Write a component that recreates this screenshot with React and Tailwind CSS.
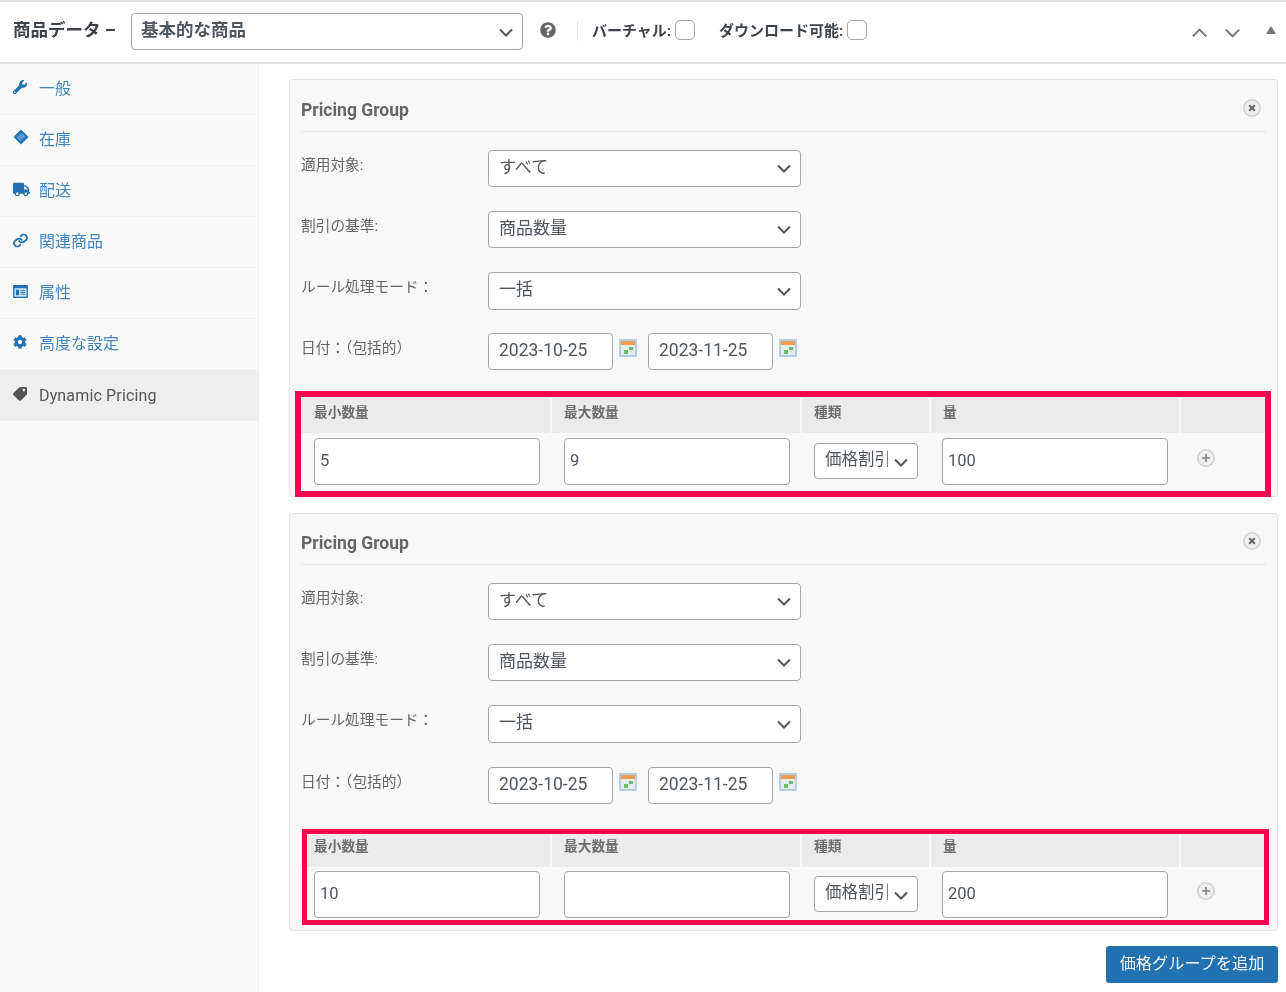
import React from "react";
import { FaWrench, FaTruck, FaCog, FaTag, FaQuestionCircle } from "react-icons/fa";
import { Link } from "lucide-react";

const FONT = "[font-family:Roboto,'Noto_Sans_CJK_JP',sans-serif]";

function Chevron({ className, color = "#50575e", width = 2 }) {
  return (
    <svg viewBox="0 0 14 9" className={className} fill="none" stroke={color} strokeWidth={width}>
      <path d="M1 1.5 L7 7.5 L13 1.5" />
    </svg>
  );
}

function Select({ value, wrap, select, chev }) {
  return (
    <div className={`relative ${wrap}`}>
      <select
        defaultValue={value}
        className={`block w-full h-full appearance-none bg-white border border-[#a3a6aa] rounded-[4px] text-[#50575e] pb-[2px] ${select}`}
      >
        <option>{value}</option>
      </select>
      <Chevron className={`absolute pointer-events-none w-[14px] h-[9px] ${chev}`} />
    </div>
  );
}

function CalendarIcon() {
  return (
    <svg viewBox="0 0 18 18" className="w-[18px] h-[18px] mb-[13px] ml-[6px] shrink-0">
      <rect x="0" y="0" width="18" height="18" rx="1" fill="#b4cfea" />
      <rect x="2" y="2" width="14" height="14" fill="#e4ecef" />
      <rect x="2" y="2" width="14" height="4" fill="#f59a4c" />
      <rect x="5" y="11" width="4" height="4" fill="#6fbf62" />
      <rect x="10" y="8" width="4" height="3" fill="#6fbf62" />
    </svg>
  );
}

function DateInput({ value }) {
  return (
    <input
      defaultValue={value}
      className="w-[125px] h-[37px] bg-white border border-[#a3a6aa] rounded-[4px] px-[10px] pb-[3px] text-[17.5px] text-[#50575e] outline-none"
    />
  );
}

function Label({ children }) {
  return <div className="w-[187px] shrink-0 text-[14.7px] leading-[20px] text-[#666] pt-[5px]">{children}</div>;
}

function RoundIcon({ kind }) {
  return (
    <svg viewBox="0 0 18 18" className="w-[18px] h-[18px]">
      <circle cx="9" cy="9" r="9" fill="#d2d2d2" />
      <circle cx="9" cy="9" r="7.4" fill="#efefef" />
      {kind === "plus" ? (
        <path d="M9 5V13M5 9H13" stroke="#808080" strokeWidth="1.6" />
      ) : (
        <path d="M6.2 6.2L11.8 11.8M11.8 6.2L6.2 11.8" stroke="#666" strokeWidth="2" />
      )}
    </svg>
  );
}

function NumInput({ value }) {
  return (
    <input
      defaultValue={value}
      className="block w-[226px] h-[47px] bg-white border border-[#a3a6aa] rounded-[4px] px-[5px] pb-[3px] text-[16.5px] text-[#50575e] outline-none"
    />
  );
}

function Head({ children, pad = "pl-[13px]", cls }) {
  return <div className={`bg-[#ebebeb] flex items-center ${pad} ${cls} text-[13.7px] font-bold text-[#6e6e6e]`}>{children}</div>;
}

function Panel({ min, max, amount, v }) {
  return (
    <section className={`bg-[#f8f8f8] border border-[#e5e5e5] rounded-[3px] px-[11px] ${v.panel}`}>
      <h3 className={`flex items-center justify-between border-b border-[#e6e6e6] text-[17.5px] font-bold text-[#666] pr-[5px] ${v.title}`}>
        <span>Pricing Group</span>
        <span className="mb-[5px]"><RoundIcon kind="x" /></span>
      </h3>
      <div className="flex mt-[18px] mb-[24px] h-[37px]">
        <Label>適用対象:</Label>
        <Select value="すべて" wrap="w-[313px] h-[37px]" select="px-[10px] text-[17px]" chev="right-[10px] top-[14px]" />
      </div>
      <div className="flex mb-[24px] h-[37px]">
        <Label>割引の基準:</Label>
        <Select value="商品数量" wrap="w-[313px] h-[37px]" select="px-[10px] text-[17px]" chev="right-[10px] top-[14px]" />
      </div>
      <div className={`flex h-[37px] ${v.row3}`}>
        <Label>ルール処理モード：</Label>
        <Select value="一括" wrap="w-[313px] h-[38px]" select="px-[10px] text-[17px]" chev="right-[10px] top-[15px]" />
      </div>
      <div className={`flex items-end h-[37px] ${v.row4}`}>
        <div className="w-[187px] shrink-0 self-start text-[14.7px] leading-[20px] text-[#666] pt-[5px]">日付：（包括的）</div>
        <DateInput value="2023-10-25" />
        <CalendarIcon />
        <div className="w-[11px] shrink-0" />
        <DateInput value="2023-11-25" />
        <CalendarIcon />
      </div>
      <div className="relative">
        <div className="grid grid-cols-[249px_248px_127px_248px_85px] gap-x-[2px]">
          <Head cls={v.headText}>最小数量</Head>
          <Head pad="pl-[12px]" cls={v.headText}>最大数量</Head>
          <Head pad="pl-[12px]" cls={v.headText}>種類</Head>
          <Head pad="pl-[12px]" cls={v.headText}>量</Head>
          <div className={`bg-[#ebebeb] ${v.head}`} />
          <div className={`pl-[13px] ${v.cell}`}><NumInput value={min} /></div>
          <div className={`pl-[12px] ${v.cell}`}><NumInput value={max} /></div>
          <div className={`pl-[12px] ${v.cellSelect}`}>
            <Select value="価格割引" wrap="w-[104px] h-[36px]" select="pl-[10px] pr-[29px] text-[16.5px] overflow-hidden" chev="right-[10px] top-[15px]" />
          </div>
          <div className={`pl-[11px] ${v.cell}`}><NumInput value={amount} /></div>
          <div className={`pl-[16px] ${v.cellPlus}`}><RoundIcon kind="plus" /></div>
        </div>
        <div className={`absolute border-[#ff0050] pointer-events-none ${v.box}`} />
      </div>
    </section>
  );
}

const NAV = [
  ["一般", <FaWrench className="w-[14px] h-[14px]" />, "mb-[4px]"],
  ["在庫", (
    <svg viewBox="0 0 16 16" className="w-[16px] h-[16px]">
      <path d="M8 .5L15.5 8 8 15.5 .5 8Z" fill="#2271b1" />
      <path d="M8.6 3.6L12.4 7.4 7.4 12.4 3.6 8.6Z" fill="#5b9bd0" />
    </svg>
  ), "mb-[6px]"],
  ["配送", <FaTruck className="w-[17px] h-[15px]" />, "mb-[4px]"],
  ["関連商品", <Link className="w-[15px] h-[15px] rotate-[5deg]" strokeWidth={2.8} />, "mb-[4px]"],
  ["属性", (
    <svg viewBox="0 0 16 14" className="w-[15px] h-[13px]">
      <rect width="16" height="14" rx="1" fill="#2271b1" />
      <rect x="1.5" y="3.5" width="13" height="9" fill="#d5e5f2" />
      <rect x="3" y="5" width="3.5" height="6" fill="#2271b1" />
      <path d="M8 6H13M8 8H13M8 10H13" stroke="#2271b1" strokeWidth="1" />
    </svg>
  ), "mb-[4px]"],
  ["高度な設定", <FaCog className="w-[14px] h-[14px]" />, "mb-[4px]"],
];

export default function App() {
  return (
    <div className={`w-[1286px] h-[992px] overflow-hidden bg-white flex flex-col blur-[0.35px] ${FONT}`}>
      <header className="h-[64px] shrink-0 border-t-2 border-b-2 border-[#e2e2e2] flex items-center pl-[13px] pb-[2px] text-[#3c434a]">
        <span className="w-[118px] text-[17.5px] font-bold whitespace-nowrap pb-[1px]">商品データ –</span>
        <Select value="基本的な商品" wrap="w-[392px] h-[37px] mt-[1px]" select="px-[9px] text-[17.5px] font-bold" chev="right-[10px] top-[15px]" />
        <FaQuestionCircle className="w-[16px] h-[16px] ml-[17px] mb-[2px] text-[#666]" />
        <span className="w-px h-[20px] bg-[#e5e5e5] ml-[21px] mr-[14px]" />
        <span className="text-[15px] font-bold whitespace-nowrap w-[83px]">バーチャル:</span>
        <span className="w-[20px] h-[20px] bg-white border border-[#a3a6aa] rounded-[5px] mb-[2px]" />
        <span className="text-[15px] font-bold whitespace-nowrap ml-[24px] w-[128px]">ダウンロード可能:</span>
        <span className="w-[20px] h-[20px] bg-white border border-[#a3a6aa] rounded-[5px] mb-[2px]" />
        <div className="ml-auto flex items-center pr-[10px]">
          <Chevron className="w-[17px] h-[10px] rotate-180 mr-[16px] mt-[3px]" color="#72777c" width={1.8} />
          <Chevron className="w-[17px] h-[10px] mr-[25px] mt-[3px]" color="#72777c" width={1.8} />
          <svg viewBox="0 0 10 8" className="w-[10px] h-[8px] mb-[3px]"><path d="M5 0L10 8H0Z" fill="#72777c" /></svg>
        </div>
      </header>
      <div className="flex flex-1 min-h-0">
        <nav className="w-[259px] shrink-0 bg-[#fafafa] border-r border-[#eeeeee]">
          {NAV.map(([t, icon, mb]) => (
            <div key={t} className="h-[51px] border-b border-[#f1f1f1] flex items-center text-[#2271b1] text-[16px]">
              <span className={`w-[39px] pl-[13px] ${mb} flex`}>{icon}</span>
              <span className="opacity-85">{t}</span>
            </div>
          ))}
          <div className="h-[51px] bg-[#eeeeee] flex items-center text-[#555] text-[16px]">
            <span className="w-[39px] pl-[13px] mb-[4px] flex"><FaTag className="w-[14px] h-[14px] rotate-90" /></span>
            <span className="tracking-[0.15px]">Dynamic Pricing</span>
          </div>
        </nav>
        <main className="flex-1 pl-[30px] pr-[8px] pt-[15px]">
          <Panel
            min="5" max="9" amount="100"
            v={{
              panel: "h-[418px] mb-[16px]",
              title: "h-[52px] pt-[10px]",
              row3: "mb-[24px]",
              row4: "mb-[28px]",
              head: "h-[35px]",
              headText: "pb-[6px]",
              cell: "h-[58px] pt-[5px]",
              cellSelect: "h-[58px] pt-[10px]",
              cellPlus: "h-[58px] pt-[16px]",
              box: "border-[6px] -left-[6px] -right-[5px] -top-[7px] -bottom-[6px]",
            }}
          />
          <Panel
            min="10" max="" amount="200"
            v={{
              panel: "h-[418px]",
              title: "h-[51px] pt-[8px]",
              row3: "mb-[25px]",
              row4: "mb-[30px]",
              head: "h-[33px]",
              headText: "pb-[8px]",
              cell: "h-[52px] pt-[4px]",
              cellSelect: "h-[52px] pt-[9px]",
              cellPlus: "h-[52px] pt-[15px]",
              box: "border-[5px] left-[1px] right-[-3px] -top-[5px] -bottom-[6px]",
            }}
          />
          <div className="flex justify-end mt-[15px]">
            <button className="w-[172px] h-[37px] bg-[#2271b1] rounded-[3px] text-[#f0f6fc] text-[16.2px]">価格グループを追加</button>
          </div>
        </main>
      </div>
    </div>
  );
}
